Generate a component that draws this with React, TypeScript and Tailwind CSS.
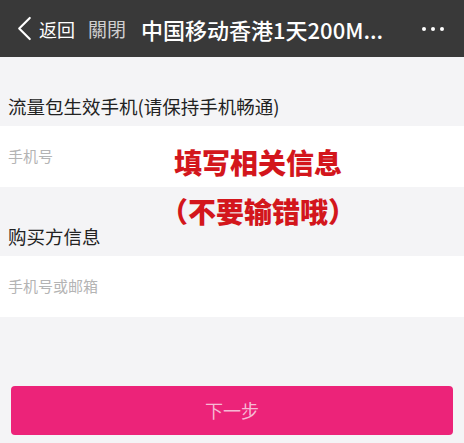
export default function App() {
  const font = { fontFamily: '"Noto Sans CJK SC", "Noto Sans", sans-serif' };
  return (
    <div
      className="relative flex h-[443px] w-[464px] flex-col overflow-hidden bg-[#f4f4f6] font-['Noto_Sans_CJK_SC','Noto_Sans',sans-serif]"
    >
      {/* 顶部导航 */}
      <div className="flex h-[57px] shrink-0 items-center bg-[#393939] pl-[16px] pr-[20px]">
        <svg viewBox="0 0 16 26" className="h-[25px] w-[16px] text-white" fill="none" stroke="currentColor" strokeWidth="2.2" strokeLinecap="round" strokeLinejoin="round">
          <polyline points="14,2 3,13 14,24" />
        </svg>
        <span className="ml-[7px] text-[18px] leading-none text-white">返回</span>
        <span className="ml-[13px] text-[19px] leading-none text-[#cfcfcf]">關閉</span>
        <span className="ml-[15px] text-[22px] font-medium leading-none text-white">中国移动香港1天200M...</span>
        <span className="ml-auto flex gap-[5px]">
          <i className="block h-[4px] w-[4px] rounded-full bg-white" />
          <i className="block h-[4px] w-[4px] rounded-full bg-white" />
          <i className="block h-[4px] w-[4px] rounded-full bg-white" />
        </span>
      </div>

      {/* 表单 */}
      <div className="relative">
        <div className="px-[8px] pb-[8px] pt-[37px] text-[18.5px] leading-[24px] text-[#222]">
          流量包生效手机(请保持手机畅通)
        </div>
        <div className="flex h-[61px] items-center bg-white px-[8px] text-[15px] text-[#b4b4b4]">
          手机号
        </div>
        <div className="px-[8px] pb-[8px] pt-[37px] text-[18.5px] leading-[24px] text-[#222]">
          购买方信息
        </div>
        <div className="flex h-[61px] items-center bg-white px-[8px] text-[15px] text-[#b4b4b4]">
          手机号或邮箱
        </div>

        {/* 红色提示 */}
        <div
          className="absolute left-[150px] top-[90px] flex w-[216px] flex-col items-center gap-[19px] text-[28px] font-black leading-[30px] text-[#d3161c]"
          style={font}
        >
          <span>填写相关信息</span>
          <span>（不要输错哦）</span>
        </div>
      </div>

      <div className="mt-[69px] px-[11px]">
        <button className="flex h-[49px] w-full items-center justify-center rounded-[4px] bg-[#ec2379] text-[18px] text-[#f6b9d4]">
          下一步
        </button>
      </div>
    </div>
  );
}
